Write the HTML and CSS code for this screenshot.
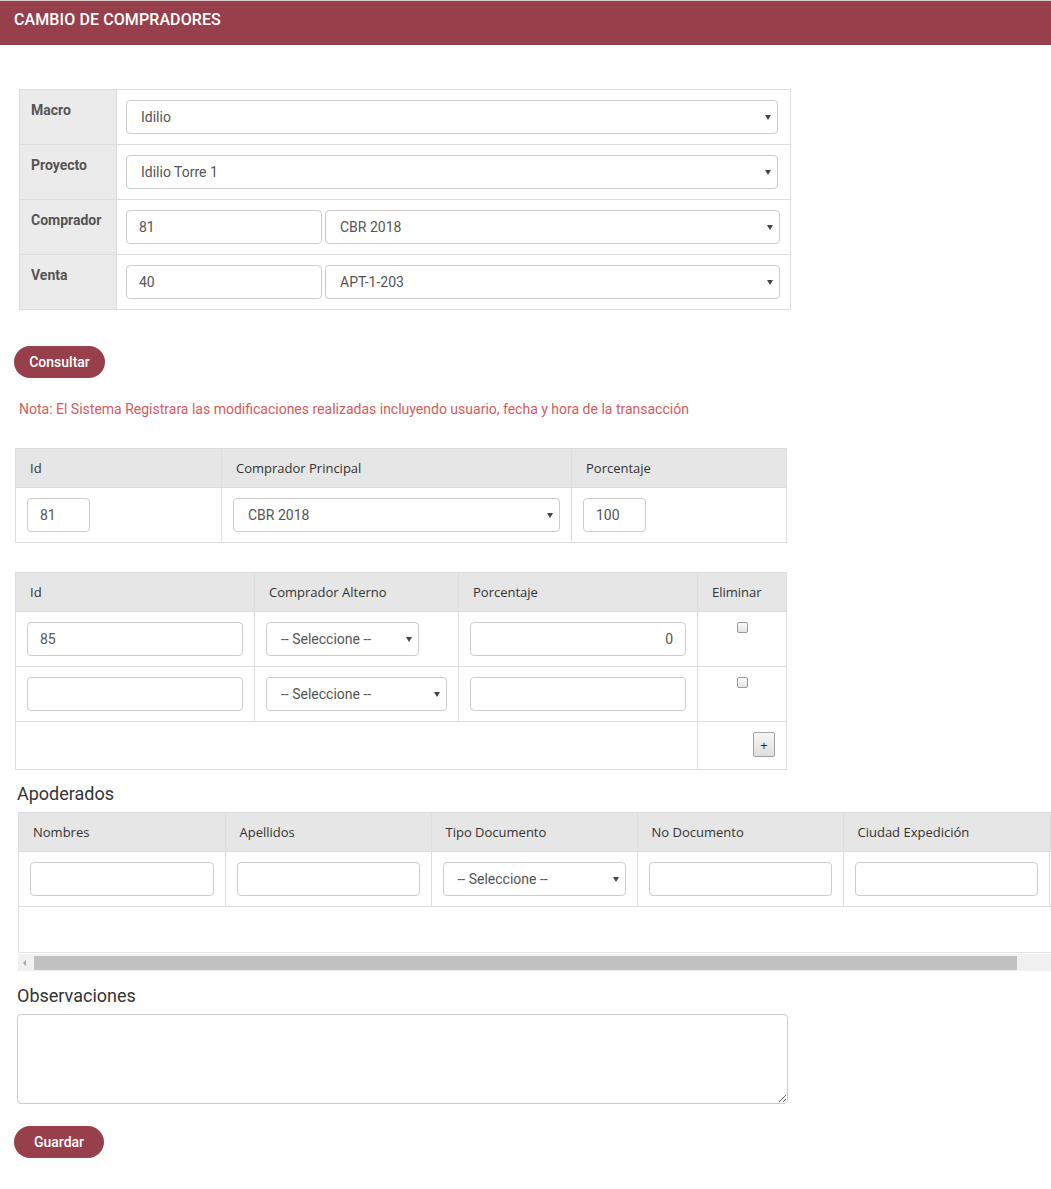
FILE: index.html
```html
<!DOCTYPE html>
<html lang="es">
<head>
<meta charset="utf-8">
<title>Cambio de compradores</title>
<link rel="stylesheet" href="styles.css">
</head>
<body>
<div class="topline"></div>
<header class="bar"><h1 class="bar-title">CAMBIO DE COMPRADORES</h1></header>
<main class="page">
  <table class="filters">
    <colgroup><col class="c-label"><col class="c-value"></colgroup>
    <tr><th>Macro</th><td><div class="sel w652"><span>Idilio</span><i class="caret"></i></div></td></tr>
    <tr><th>Proyecto</th><td><div class="sel w652"><span>Idilio Torre 1</span><i class="caret"></i></div></td></tr>
    <tr><th>Comprador</th><td><div class="pair"><input class="inp w196" value="81"><div class="sel w455"><span>CBR 2018</span><i class="caret"></i></div></div></td></tr>
    <tr><th>Venta</th><td><div class="pair"><input class="inp w196" value="40"><div class="sel w455"><span>APT-1-203</span><i class="caret"></i></div></div></td></tr>
  </table>

  <button class="btn btn-consultar">Consultar</button>

  <p class="nota">Nota: El Sistema Registrara las modificaciones realizadas incluyendo usuario, fecha y hora de la transacción</p>

  <table class="grid grid-main">
    <colgroup><col style="width:206px"><col style="width:350px"><col style="width:215px"></colgroup>
    <tr><th>Id</th><th>Comprador Principal</th><th>Porcentaje</th></tr>
    <tr>
      <td><input class="inp w63" value="81"></td>
      <td><div class="sel full"><span>CBR 2018</span><i class="caret"></i></div></td>
      <td><input class="inp w63" value="100"></td>
    </tr>
  </table>

  <table class="grid grid-alt">
    <colgroup><col style="width:239px"><col style="width:204px"><col style="width:239px"><col style="width:89px"></colgroup>
    <tr><th>Id</th><th>Comprador Alterno</th><th>Porcentaje</th><th>Eliminar</th></tr>
    <tr>
      <td><input class="inp full" value="85"></td>
      <td><div class="sel w153"><span>-- Seleccione --</span><i class="caret"></i></div></td>
      <td><input class="inp full num" value="0"></td>
      <td class="chk-cell"><span class="chk"></span></td>
    </tr>
    <tr>
      <td><input class="inp full" value=""></td>
      <td><div class="sel w181"><span>-- Seleccione --</span><i class="caret"></i></div></td>
      <td><input class="inp full" value=""></td>
      <td class="chk-cell"><span class="chk"></span></td>
    </tr>
    <tr class="add-row">
      <td colspan="3"></td>
      <td class="add-cell"><button class="plus">+</button></td>
    </tr>
  </table>

  <h2 class="section">Apoderados</h2>
  <div class="apod-wrap">
    <div class="apod-box">
      <table class="grid apod">
        <colgroup><col style="width:206px"><col style="width:206px"><col style="width:206px"><col style="width:206px"><col style="width:206px"><col style="width:206px"></colgroup>
        <tr><th>Nombres</th><th>Apellidos</th><th>Tipo Documento</th><th>No Documento</th><th>Ciudad Expedición</th><th></th></tr>
        <tr>
          <td><input class="inp full" value=""></td>
          <td><input class="inp full" value=""></td>
          <td><div class="sel full"><span>-- Seleccione --</span><i class="caret"></i></div></td>
          <td><input class="inp full" value=""></td>
          <td><input class="inp full" value=""></td>
          <td><input class="inp full" value=""></td>
        </tr>
      </table>
    </div>
    <div class="hscroll">
      <span class="hs-btn"><i class="hs-arrow"></i></span>
      <span class="hs-thumb"></span>
    </div>
  </div>

  <h2 class="section obs">Observaciones</h2>
  <textarea class="obs-text"></textarea>

  <button class="btn btn-guardar">Guardar</button>
</main>
</body>
</html>
```

FILE: styles.css
```css
html, body {
  overflow-x: hidden;
}
body {
  margin: 0;
  font-family: Roboto, "Liberation Sans", Arial, sans-serif;
  font-size: 14px;
  color: #333;
  background: #fff;
}
.topline {
  height: 1px;
  background: #dcc9cc;
}
.bar {
  height: 44px;
  background: #973f4a;
  box-sizing: border-box;
  padding: 9px 14px 0;
}
.bar-title {
  margin: 0;
  font-size: 16px;
  line-height: 20px;
  font-weight: 500;
  color: #fff;
  letter-spacing: 0.1px;
}
.page {
  padding: 0 0 0 14px;
}

/* filters table */
.filters {
  margin: 44px 0 0 5px;
  border-collapse: collapse;
  table-layout: fixed;
  width: 771px;
}
.c-label { width: 97px; }
.c-value { width: 674px; }
.filters th, .filters td {
  border: 1px solid #ddd;
  vertical-align: top;
}
.filters th {
  background: #ebebeb;
  text-align: left;
  font-weight: 700;
  color: #555;
  font-size: 14px;
  line-height: 20px;
  padding: 10px 11px;
}
.filters td {
  padding: 10px 9px;
  height: 34px;
}
.pair {
  display: flex;
  gap: 3px;
}

/* inputs */
.inp {
  box-sizing: border-box;
  height: 34px;
  border: 1px solid #ccc;
  border-radius: 4px;
  padding: 6px 12px;
  font-family: Roboto, "Liberation Sans", Arial, sans-serif;
  font-size: 14px;
  color: #555;
  background: #fff;
  margin: 0;
  display: block;
}
.inp.num { text-align: right; }
.sel {
  box-sizing: border-box;
  height: 34px;
  border: 1px solid #ccc;
  border-radius: 4px;
  padding: 0 6px 0 14px;
  font-size: 14px;
  color: #555;
  background: #fff;
  display: flex;
  align-items: center;
  justify-content: space-between;
}
.caret {
  width: 0;
  height: 0;
  border-left: 3px solid transparent;
  border-right: 3px solid transparent;
  border-top: 5px solid #444;
}
.w652 { width: 652px; }
.w455 { width: 455px; }
.w196 { width: 196px; }
.w63 { width: 63px; }
.w153 { width: 153px; }
.w181 { width: 181px; }
.full { width: 100%; }

/* buttons */
.btn {
  display: block;
  border: 0;
  background: #973f4a;
  color: #fff;
  font-family: Roboto, "Liberation Sans", Arial, sans-serif;
  font-size: 14px;
  font-weight: 500;
  height: 32px;
  border-radius: 16px;
  padding: 0;
}
.btn-consultar {
  margin-top: 36px;
  width: 91px;
}
.btn-guardar {
  margin-top: 22px;
  width: 90px;
}

.nota {
  margin: 21px 0 0 5px;
  line-height: 20px;
  color: #d65a5d;
  font-size: 14px;
}

/* grids */
.grid {
  border-collapse: collapse;
  table-layout: fixed;
  margin-left: 1px;
}
.grid-main {
  width: 771px;
  margin-top: 29px;
}
.grid-alt {
  width: 771px;
  margin-top: 29px;
}
.grid th, .grid td {
  border: 1px solid #ddd;
  vertical-align: top;
}
.grid th {
  background: #e6e6e6;
  font-family: "Open Sans", "DejaVu Sans", sans-serif;
  font-size: 13px;
  line-height: 18px;
  font-weight: 400;
  color: #333;
  text-align: left;
  padding: 10px 14px 10px;
}
.grid td {
  padding: 10px 11px;
  height: 34px;
}
.chk-cell {
  text-align: center;
}
.chk {
  display: block;
  margin: 0 auto;
  width: 9px;
  height: 9px;
  border: 1px solid #9a9a9a;
  border-radius: 2px;
  background: linear-gradient(#fafafa, #e4e4e4);
}
.grid .add-row td {
  height: 25px;
  padding: 10px 11px 12px;
}
.grid td.add-cell {
  text-align: right;
}
.plus {
  display: inline-block;
  vertical-align: top;
  width: 22px;
  height: 25px;
  padding: 0;
  border: 1px solid #a3a3a3;
  border-radius: 2px;
  background: linear-gradient(#f6f6f6, #dedede);
  font-family: "Open Sans", "DejaVu Sans", sans-serif;
  font-size: 13px;
  color: #222;
  line-height: 22px;
}

.section {
  margin: 14px 0 8px 3px;
  font-size: 18px;
  line-height: 20px;
  font-weight: 400;
  color: #333;
}

.apod-wrap {
  margin-left: 4px;
  width: 1160px;
}
.apod-box {
  border-left: 1px solid #ddd;
  border-bottom: 1px solid #e3e3e3;
  padding-bottom: 45px;
}
.apod {
  margin-left: 0;
  width: 1236px;
}
.apod tr > :first-child {
  border-left: 0;
}
.hscroll {
  margin-top: 1px;
  height: 17px;
  background: #f1f1f1;
  display: flex;
  align-items: flex-start;
}
.hs-btn {
  width: 12px;
  height: 17px;
  display: flex;
  align-items: center;
  justify-content: center;
  flex: none;
}
.hs-arrow {
  width: 0;
  height: 0;
  border-top: 3px solid transparent;
  border-bottom: 3px solid transparent;
  border-right: 3px solid #a3a3a3;
}
.hs-thumb {
  margin: 2px 0 0 4px;
  width: 983px;
  height: 14px;
  background: #c1c1c1;
}

.obs {
  margin-top: 15px;
}
.obs-text {
  display: block;
  margin: 0 0 0 3px;
  width: 771px;
  height: 90px;
  box-sizing: border-box;
  border: 1px solid #ccc;
  border-radius: 4px;
  font-family: Roboto, "Liberation Sans", Arial, sans-serif;
  font-size: 14px;
}
```
